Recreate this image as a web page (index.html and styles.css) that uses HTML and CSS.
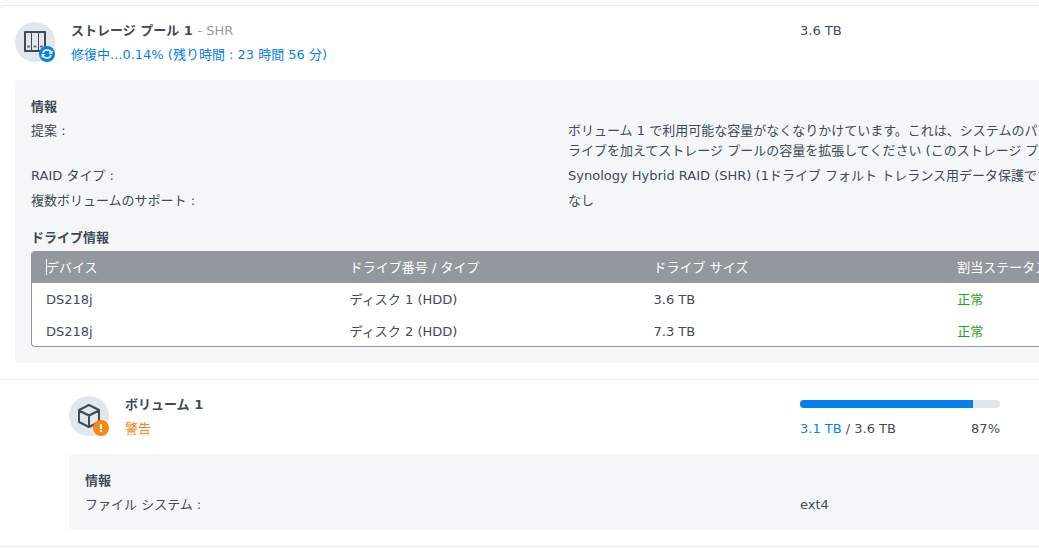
FILE: index.html
```
<!doctype html>
<html lang="ja">
    <head>
        <meta charset="utf-8">
        <meta name="viewport" content="width=device-width, initial-scale=1">
        <title>ストレージ プール 1</title>
        <link rel="stylesheet" href="styles.css">
    </head>
    <body>
        <main class="pool">
            <section>
                <header class="item-header">
                    <div class="icon">
                        <svg width="40" height="40" viewBox="0 0 40 40">
                            <circle cx="20" cy="20" r="20" fill="#e1e7ed"/>
                            <rect x="10" y="10" width="20" height="19" fill="none" stroke="#414b55" stroke-width="2" stroke-linejoin="round"/>
                            <path d="M16.5 10v19M23.5 10v19" stroke="#414b55"/>
                            <path d="M12 24.5h3M18.500 24.500h3M25 24.500h3" stroke="#6b747d" stroke-width="2"/>
                            <circle cx="32" cy="32" r="8" fill="#057feb"/>
                            <path d="M28 31c1-3.500 6-4 8-1M36 33c-1 3.500-6 4-8 1" fill="none" stroke="#fff" stroke-width="1.600"/>
                            <path d="M37.500 28v4h-4zM26.500 36v-4h4z" fill="#fff"/>
                        </svg>
                    </div>
                    <div class="name">
                        <h2>ストレージ プール 1 <span class="type">- SHR</span></h2>
                        <p class="repairing">修復中...0.14% (残り時間 : 23 時間 56 分)</p>
                    </div>
                    <div class="usage">3.6 TB</div>
                </header>
                <div class="panel">
                    <h3>情報</h3>
                    <dl class="info pool-info">
                        <dt>提案 :</dt>
                        <dd>ボリューム 1 で利用可能な容量がなくなりかけています。これは、システムのパフォーマンスに<br>ライブを加えてストレージ プールの容量を拡張してください (このストレージ プール</dd>
                        <dt>RAID タイプ :</dt>
                        <dd>Synology Hybrid RAID (SHR) (1ドライブ フォルト トレランス用データ保護です)</dd>
                        <dt>複数ボリュームのサポート :</dt>
                        <dd>なし</dd>
                    </dl>
                    <h3 class="drives-title">ドライブ情報</h3>
                    <div class="drives">
                        <table>
                            <thead>
                                <tr>
                                    <th class="focus">デバイス</th>
                                    <th>ドライブ番号 / タイプ</th>
                                    <th>ドライブ サイズ</th>
                                    <th>割当ステータス</th>
                                </tr>
                            </thead>
                            <tbody>
                                <tr>
                                    <td>DS218j</td>
                                    <td>ディスク 1 (HDD)</td>
                                    <td>3.6 TB</td>
                                    <td class="ok">正常</td>
                                </tr>
                                <tr>
                                    <td>DS218j</td>
                                    <td>ディスク 2 (HDD)</td>
                                    <td>7.3 TB</td>
                                    <td class="ok">正常</td>
                                </tr>
                            </tbody>
                        </table>
                    </div>
                </div>
            </section>
            <section class="volume">
                <header class="item-header">
                    <div class="icon">
                        <svg width="40" height="40" viewBox="0 0 40 40">
                            <circle cx="20" cy="20" r="20" fill="#e1e7ed"/>
                            <path d="M20 9l10 5v12l-10 5-10-5V14zM10 14.500l10 5 10-5M20 19.500V31" fill="none" stroke="#414b55" stroke-width="2" stroke-linejoin="round"/>
                            <circle cx="32" cy="32" r="8" fill="#fa8714"/>
                            <path d="M32 28v5M32 34v2" stroke="#fff" stroke-width="2"/>
                        </svg>
                    </div>
                    <div class="name">
                        <h2>ボリューム 1</h2>
                        <p class="warning">警告</p>
                    </div>
                    <div class="usage">
                        <progress value="173" max="200" aria-label="使用容量"></progress>
                        <div class="amount">
                            <span><span class="used">3.1 TB</span> / 3.6 TB</span>
                            <span>87%</span>
                        </div>
                    </div>
                </header>
                <div class="panel">
                    <h3>情報</h3>
                    <dl class="info volume-info">
                        <dt>ファイル システム :</dt>
                        <dd>ext4</dd>
                    </dl>
                </div>
            </section>
        </main>
    </body>
</html>
```

FILE: styles.css
```
* {
    box-sizing: border-box;
}
body {
    margin: 0;
    overflow-x: hidden;
    background: #fff;
    color: #414b55;
    font-family: 'DejaVu Sans', 'Noto Sans CJK JP', sans-serif;
    font-size: 13px;
    line-height: 20px;
}
h2, h3, p, dl, dd {
    margin: 0;
}
h2, h3 {
    font-size: 13px;
    font-weight: bold;
}

/* storage pool card */
.pool {
    min-width: 1282px;
    margin: 5px 0 0 -1px;
    border: 1px solid #e6ecf1;
    border-radius: 4px;
}
.pool section {
    padding: 0 16px 16px 15px;
}
.pool .volume {
    padding-left: 69px;
    border-top: 1px solid #ebeef1;
}
.item-header {
    display: flex;
    padding: 13px 0;
    line-height: 24px;
}
.icon {
    width: 40px;
    height: 40px;
    margin: 3px 16px 0 0;
}
.icon svg {
    display: block;
}
.name {
    flex: 1;
}
.name h2 {
    line-height: 24px;
}
.type {
    color: #969ba5;
    font-weight: normal;
}
.repairing, .used {
    color: #057feb;
}
.warning {
    color: #fa8714;
}

/* capacity */
.usage {
    flex: 0 0 464px;
}
progress {
    display: block;
    width: 200px;
    height: 8px;
    margin: 7px 0 9px;
    border: none;
    border-radius: 4px;
    overflow: hidden;
    -webkit-appearance: none;
    appearance: none;
}
progress::-webkit-progress-bar {
    background: #e1e6eb;
}
progress::-webkit-progress-value {
    background: #057feb;
}
.amount {
    display: flex;
    justify-content: space-between;
    width: 200px;
}

/* details */
.panel {
    padding: 17px 16px 15px;
    border-radius: 4px;
    background: #f4f6f8;
}
.info {
    display: grid;
    row-gap: 5px;
    margin-top: 4px;
    white-space: nowrap;
}
.pool-info {
    grid-template-columns: 1fr 680px;
}
.volume-info {
    grid-template-columns: 1fr 448px;
}
.drives-title {
    margin: 17px 0 3px;
}
.drives {
    margin-bottom: 1px;
    border: 1px solid #93989f;
    border-top: none;
    border-radius: 4px;
    overflow: hidden;
    background: #fff;
}
table {
    width: 100%;
    table-layout: fixed;
    border-collapse: collapse;
}
th, td {
    height: 32px;
    padding: 2px 14px 0;
    text-align: left;
}
tbody tr:last-child td {
    height: 31px;
}
th {
    background: #93989f;
    color: #fff;
    font-weight: normal;
}
.focus {
    position: relative;
}
.focus::before {
    content: "";
    position: absolute;
    top: 8px;
    left: 14px;
    width: 1px;
    height: 16px;
    background: #fff;
}
.ok {
    color: #1ba51b;
}
```
